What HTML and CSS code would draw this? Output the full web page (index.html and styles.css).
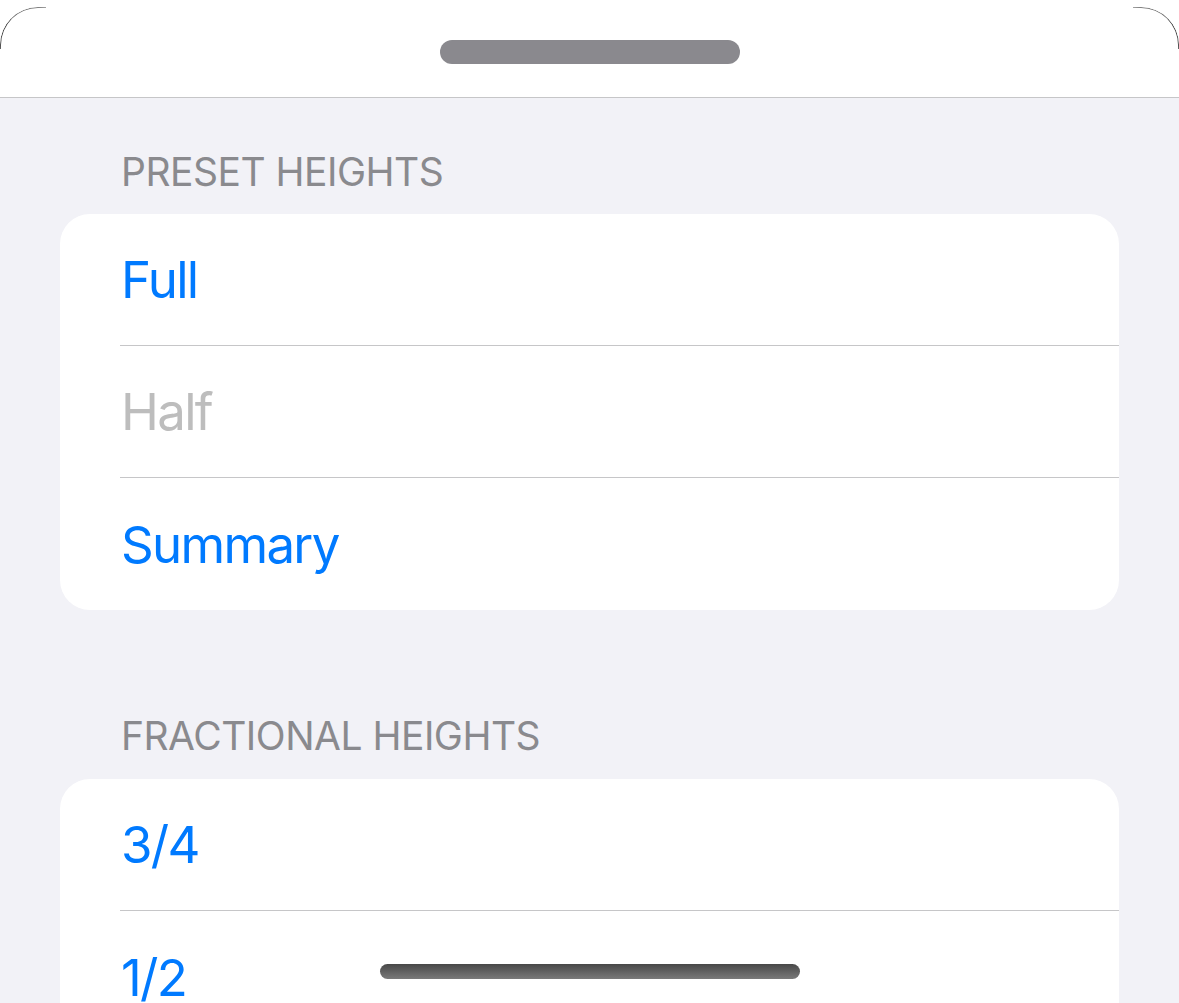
FILE: index.html
```html
<!DOCTYPE html>
<html>
<head>
<meta charset="utf-8">
<link rel="stylesheet" href="styles.css">
</head>
<body>
<div class="screen">
  <div class="sheet-head">
    <div class="grabber"></div>
  </div>
  <div class="content">
    <div class="section-title first">PRESET HEIGHTS</div>
    <div class="card">
      <div class="row"><span class="label">Full</span></div>
      <div class="row"><span class="label disabled">Half</span></div>
      <div class="row last"><span class="label">Summary</span></div>
    </div>
    <div class="section-title second">FRACTIONAL HEIGHTS</div>
    <div class="card">
      <div class="row"><span class="label">3/4</span></div>
      <div class="row last"><span class="label">1/2</span></div>
    </div>
  </div>
  <div class="home-indicator"></div>
</div>
</body>
</html>
```

FILE: styles.css
```css
html, body {
  margin: 0;
  padding: 0;
  background: #ffffff;
}
body {
  font-family: "Inter", "Roboto", "Liberation Sans", sans-serif;
  -webkit-font-smoothing: antialiased;
}
.screen {
  width: 1179px;
  height: 1003px;
  overflow: hidden;
  position: relative;
  padding-top: 7px;
  box-sizing: border-box;
  background: #ffffff;
}
.sheet-head {
  position: relative;
  height: 91px;
  background: #ffffff;
  border-bottom: 1px solid #c6c6c8;
  border-top-left-radius: 38px;
  border-top-right-radius: 38px;
  display: flex;
  justify-content: center;
  padding-top: 33px;
  box-sizing: border-box;
}
.sheet-head::before,
.sheet-head::after {
  content: "";
  position: absolute;
  top: 0;
  width: 46px;
  height: 42px;
  border-top: 1.5px solid #6e6e6e;
  box-sizing: border-box;
}
.sheet-head::before {
  left: 0;
  border-left: 1.5px solid #3a3a3a;
  border-top-left-radius: 38px;
  -webkit-mask-image: linear-gradient(135deg, #000 40%, transparent 75%);
}
.sheet-head::after {
  right: 0;
  border-right: 1.5px solid #3a3a3a;
  border-top-right-radius: 38px;
  -webkit-mask-image: linear-gradient(225deg, #000 40%, transparent 75%);
}
.grabber {
  width: 300px;
  height: 24px;
  border-radius: 12px;
  background: #8a898e;
}
.content {
  background: #f2f2f7;
  height: 905px;
  padding: 0 60px;
  box-sizing: border-box;
}
.section-title {
  font-size: 39px;
  line-height: 48px;
  color: #8a8a8e;
  padding-left: 61px;
  margin-bottom: 18px;
  letter-spacing: -0.5px;
}
.section-title.first {
  padding-top: 50px;
}
.section-title.second {
  margin-top: 102px;
  margin-bottom: 19px;
}
.card {
  background: #ffffff;
  border-radius: 30px;
  overflow: hidden;
}
.row {
  height: 132px;
  margin-left: 60px;
  border-bottom: 1px solid #c6c6c8;
  box-sizing: border-box;
  display: flex;
  align-items: center;
}
.row.last {
  border-bottom: none;
}
.label {
  font-size: 51px;
  color: #007aff;
  padding-left: 1px;
  letter-spacing: -1.7px;
}
.label.disabled {
  color: #bdbdbd;
}
.home-indicator {
  position: absolute;
  left: 380px;
  top: 964px;
  width: 420px;
  height: 15px;
  border-radius: 8px;
  background: linear-gradient(to bottom, #484848, #7a7a7a);
}
```
